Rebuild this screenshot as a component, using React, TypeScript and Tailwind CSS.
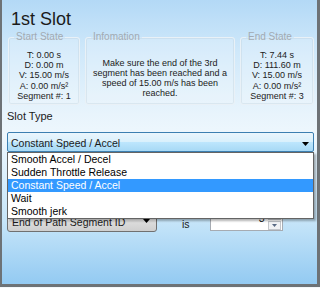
import React from 'react';

const startState = ['T: 0.00 s', 'D: 0.00 m', 'V: 15.00 m/s', 'A: 0.00 m/s²', 'Segment #: 1'];
const endState = ['T: 7.44 s', 'D: 111.60 m', 'V: 15.00 m/s', 'A: 0.00 m/s²', 'Segment #: 3'];
const slotTypes = ['Smooth Accel / Decel', 'Sudden Throttle Release', 'Constant Speed / Accel', 'Wait', 'Smooth jerk'];

function GroupBox({ title, className, children }: { title: string; className: string; children: React.ReactNode }) {
  return (
    <fieldset className={`h-[74px] shrink-0 rounded-[3px] border border-[#e9f1f7] bg-white/20 shadow-[inset_0_0_0_1px_rgba(190,205,218,0.35)] ${className}`}>
      <legend className="ml-[5px] px-[2px] text-[10px] leading-[12px] text-[#a2aab2]">{title}</legend>
      {children}
    </fieldset>
  );
}

function StateLines({ lines }: { lines: string[] }) {
  return (
    <div className="pt-[7px] text-center text-[9px] leading-[10.2px] text-[#222]">
      {lines.map((l) => (
        <div key={l}>{l}</div>
      ))}
    </div>
  );
}

function DownArrow({ className }: { className: string }) {
  return (
    <svg width="7" height="4" viewBox="0 0 7 4" className={className}>
      <path d="M0 0H7L3.5 4Z" fill="currentColor" />
    </svg>
  );
}

export default function App() {
  return (
    <div className="h-[288px] w-[320px] bg-[#f3f7fa] font-['Liberation_Sans',Arial,sans-serif] text-[#1b1b1b]">
      <div className="relative h-[287px] w-[320px] border-b-[3px] border-l-2 border-r-[3px] border-[#6d7276] bg-[linear-gradient(180deg,#b3d9f6_0%,#cfe8fa_18%,#e8f4fc_40%,#eef7fd_48%,#c6e5f9_78%,#93caf2_100%)] pl-[5px]">
        <div className="pl-[4px] pt-[9px] text-[18px] leading-[20px]">1st Slot</div>

        <div className="ml-[1px] mt-[2px] flex">
          <GroupBox title="Start State" className="w-[72px]">
            <StateLines lines={startState} />
          </GroupBox>
          <GroupBox title="Infomation" className="ml-[5px] w-[150px]">
            <div className="pt-[15px] text-center text-[9px] leading-[10px] text-[#222]">
              Make sure the end of the 3rd
              <br />
              segment has been reached and a
              <br />
              speed of 15.00 m/s has been
              <br />
              reached.
            </div>
          </GroupBox>
          <GroupBox title="End State" className="ml-[5px] w-[74px]">
            <StateLines lines={endState} />
          </GroupBox>
        </div>

        <div className="mt-[5px] text-[11px] leading-[13px]">Slot Type</div>

        <div className="mt-[9px] flex h-[20px] w-[307px] items-start justify-between rounded-[2px] border border-[#3c7fb1] bg-[linear-gradient(180deg,#eaf6fd_0%,#d9f0fc_50%,#bee6fd_50%,#a7d9f5_100%)] pl-[3px] pr-[4px] pt-[4px]">
          <span className="text-[10.5px] leading-[13px]">Constant Speed / Accel</span>
          <DownArrow className="mt-[5px] text-black" />
        </div>

        <div className="mt-[58px] flex h-[22px] items-start">
          <div className="flex h-[22px] w-[150px] items-start justify-between rounded-[3px] border border-[#707070] bg-[linear-gradient(180deg,#f2f2f2_0%,#ebebeb_50%,#dddddd_50%,#cfcfcf_100%)] pl-[4px] pr-[6px]">
            <span className="mt-[5px] text-[10.5px] leading-[13px]">End of Path Segment ID</span>
            <DownArrow className="mt-[8px] text-black" />
          </div>
          <span className="ml-[25px] mt-[8px] text-[10.5px] leading-[13px]">is</span>
          <div className="ml-[20px] flex h-[21px] w-[73px] items-start justify-end border border-[#a6abb2] bg-white">
            <span className="mr-[3px] mt-[1px] text-[10.5px] leading-[13px]">3</span>
            <div className="mr-[1px] flex h-[19px] w-[13px] flex-col">
              <div className="flex h-[9px] items-center justify-center border border-[#c3c6cb] bg-[#f1f2f4]">
                <svg width="5" height="3" viewBox="0 0 5 3">
                  <path d="M0 3H5L2.5 0Z" fill="#5a6a84" />
                </svg>
              </div>
              <div className="mt-[1px] flex h-[9px] items-center justify-center border border-[#c3c6cb] bg-[#f1f2f4]">
                <svg width="5" height="3" viewBox="0 0 5 3">
                  <path d="M0 0H5L2.5 3Z" fill="#5a6a84" />
                </svg>
              </div>
            </div>
          </div>
        </div>

        {/* open dropdown list */}
        <div className="absolute left-[5px] top-[152px] w-[307px] border border-[#646464] bg-white shadow-[2px_2px_2px_rgba(0,0,0,0.3)]">
          {slotTypes.map((t) => (
            <div
              key={t}
              className={`h-[13px] pl-[3px] text-[10.5px] leading-[13px] ${
                t === 'Constant Speed / Accel' ? 'bg-[#3399ff] text-white' : 'text-black'
              }`}
            >
              {t}
            </div>
          ))}
        </div>
      </div>
    </div>
  );
}
